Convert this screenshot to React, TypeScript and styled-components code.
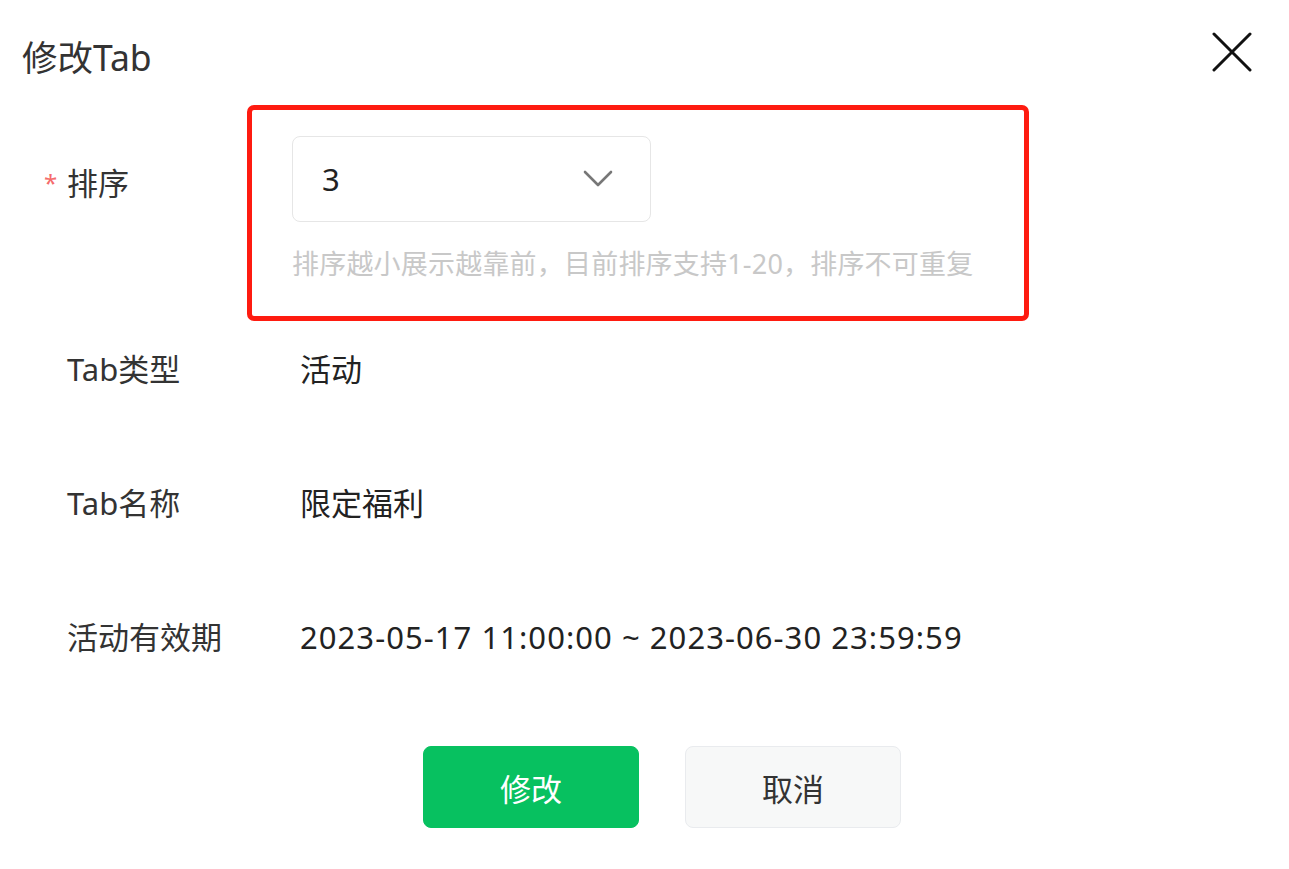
import React from "react";
import styled, { createGlobalStyle } from "styled-components";

const GlobalStyle = createGlobalStyle`
  html, body { margin: 0; padding: 0; background: #ffffff; }
  body {
    font-family: "Noto Sans", "Noto Sans CJK SC", sans-serif;
    color: #333333;
  }
  * { box-sizing: border-box; }
`;

const Dialog = styled.div`
  width: 1289px;
  height: 869px;
  background: #ffffff;
  display: flex;
  flex-direction: column;
`;

const Header = styled.div`
  display: flex;
  justify-content: space-between;
  align-items: flex-start;
  padding: 32px 37px 0 22px;
`;

const Title = styled.h1`
  margin: 5px 0 0 0;
  font-size: 35.5px;
  line-height: 40px;
  font-weight: 400;
  color: #333333;
`;

const CloseButton = styled.button`
  width: 40px;
  height: 40px;
  padding: 0;
  border: none;
  background: transparent;
  cursor: pointer;
  display: flex;
`;

const Form = styled.div`
  display: flex;
  flex-direction: column;
  padding: 59px 0 0 67px;
`;

const Row = styled.div<{ $top: number }>`
  display: grid;
  grid-template-columns: 225px 1fr;
  margin-top: ${(p) => p.$top}px;
`;

const Label = styled.div<{ $tall?: boolean }>`
  font-size: 31px;
  line-height: ${(p) => (p.$tall ? "86px" : "40px")};
  padding-top: ${(p) => (p.$tall ? "4px" : "0")};
  color: #333333;
  white-space: nowrap;
`;

const Required = styled.span`
  display: inline-block;
  width: 23px;
  margin-left: -23px;
  color: #f56c6c;
  font-size: 24px;
  vertical-align: top;
`;

const Field = styled.div`
  position: relative;
`;

const Highlight = styled.div`
  position: absolute;
  left: -45px;
  top: -31px;
  width: 782px;
  height: 216px;
  border: 5px solid #fe1b10;
  border-radius: 7px;
  pointer-events: none;
`;

const Select = styled.div`
  width: 359px;
  height: 86px;
  border: 1.5px solid #e6e6e6;
  border-radius: 8px;
  display: flex;
  align-items: center;
  justify-content: space-between;
  padding: 0 37px 0 29px;
  font-size: 31px;
  color: #222222;
`;

const Hint = styled.div`
  margin-top: 24px;
  font-size: 27px;
  line-height: 36px;
  color: #c8c8c8;
  white-space: nowrap;
  letter-spacing: 0.2px;
`;

const Value = styled.div<{ $spaced?: boolean }>`
  padding-left: 8px;
  font-size: 31px;
  line-height: 40px;
  color: #222222;
  white-space: nowrap;
  letter-spacing: ${(p) => (p.$spaced ? "1.05px" : "0")};
`;

const Footer = styled.div`
  display: flex;
  gap: 46px;
  padding: 89px 0 0 423px;
`;

const Button = styled.button<{ $primary?: boolean }>`
  width: 216px;
  height: 82px;
  border-radius: 8px;
  font-family: inherit;
  font-size: 31px;
  cursor: pointer;
  border: 1.5px solid ${(p) => (p.$primary ? "#07c160" : "#e9ebee")};
  background: ${(p) => (p.$primary ? "#07c160" : "#f7f8f8")};
  color: ${(p) => (p.$primary ? "#ffffff" : "#333333")};
`;

const CloseIcon = () => (
  <svg width="40" height="40" viewBox="0 0 40 40">
    <path d="M2 2 L38 38 M38 2 L2 38" stroke="#111111" strokeWidth="3" strokeLinecap="round" fill="none" />
  </svg>
);

const Chevron = () => (
  <svg width="30" height="18" viewBox="0 0 30 18">
    <path d="M2 2 L15 15 L28 2" stroke="#777777" strokeWidth="2.6" fill="none" strokeLinecap="round" strokeLinejoin="round" />
  </svg>
);

export default function App() {
  return (
    <>
      <GlobalStyle />
      <Dialog>
        <Header>
          <Title>修改Tab</Title>
          <CloseButton aria-label="close">
            <CloseIcon />
          </CloseButton>
        </Header>
        <Form>
          <Row $top={0}>
            <Label $tall>
              <Required>*</Required>排序
            </Label>
            <Field>
              <Highlight />
              <Select>
                <span>3</span>
                <Chevron />
              </Select>
              <Hint>排序越小展示越靠前，目前排序支持1-20，排序不可重复</Hint>
            </Field>
          </Row>
          <Row $top={67}>
            <Label>Tab类型</Label>
            <Value>活动</Value>
          </Row>
          <Row $top={94}>
            <Label>Tab名称</Label>
            <Value>限定福利</Value>
          </Row>
          <Row $top={94}>
            <Label>活动有效期</Label>
            <Value $spaced>2023-05-17 11:00:00 ~ 2023-06-30 23:59:59</Value>
          </Row>
        </Form>
        <Footer>
          <Button $primary>修改</Button>
          <Button>取消</Button>
        </Footer>
      </Dialog>
    </>
  );
}
